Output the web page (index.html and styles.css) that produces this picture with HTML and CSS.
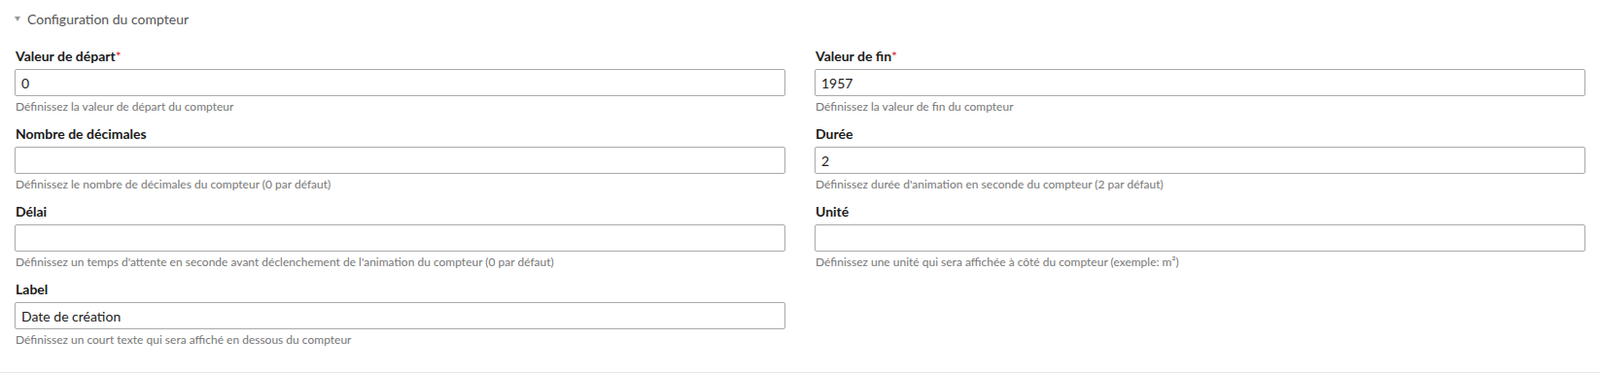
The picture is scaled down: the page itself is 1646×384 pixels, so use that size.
FILE: index.html
```html
<!DOCTYPE html>
<html>
<head>
  <meta charset="utf-8">
  <link rel="stylesheet" href="styles.css">
</head>
<body>

  <div class="panel">
    <div class="panel-title"><span class="caret"></span>Configuration du compteur</div>

    <div class="fields">
      <div class="field">
        <label for="start">Valeur de départ<span class="req">*</span></label>
        <input type="text" id="start" value="0">
        <p class="help">Définissez la valeur de départ du compteur</p>
      </div>
      <div class="field">
        <label for="end">Valeur de fin<span class="req">*</span></label>
        <input type="text" id="end" value="1957">
        <p class="help">Définissez la valeur de fin du compteur</p>
      </div>
      <div class="field">
        <label for="decimals">Nombre de décimales</label>
        <input type="text" id="decimals" value="">
        <p class="help">Définissez le nombre de décimales du compteur (0 par défaut)</p>
      </div>
      <div class="field">
        <label for="duration">Durée</label>
        <input type="text" id="duration" value="2">
        <p class="help">Définissez durée d'animation en seconde du compteur (2 par défaut)</p>
      </div>
      <div class="field">
        <label for="delay">Délai</label>
        <input type="text" id="delay" value="">
        <p class="help">Définissez un temps d'attente en seconde avant déclenchement de l'animation du compteur (0 par défaut)</p>
      </div>
      <div class="field">
        <label for="unit">Unité</label>
        <input type="text" id="unit" value="">
        <p class="help">Définissez une unité qui sera affichée à côté du compteur (exemple: m²)</p>
      </div>
      <div class="field">
        <label for="label">Label</label>
        <input type="text" id="label" value="Date de création">
        <p class="help">Définissez un court texte qui sera affiché en dessous du compteur</p>
      </div>
    </div>
  </div>

</body>
</html>
```

FILE: styles.css
```css
body {
  margin: 0;
  background-color: #fff;
  font-family: Lato, "Open Sans", sans-serif;
  color: #222;
}
.panel {
  padding: 10px 15px 24px;
  border-bottom: 1px solid #e6e6e6;
  height: 349px;
}
.panel-title {
  display: flex;
  align-items: center;
  height: 18px;
  font-size: 14px;
  color: #555;
}
.caret {
  width: 0;
  height: 0;
  margin-right: 7px;
  border-left: 3px solid transparent;
  border-right: 3px solid transparent;
  border-top: 5px solid #999;
}
.fields {
  display: grid;
  grid-template-columns: 1fr 1fr;
  column-gap: 30px;
  margin-top: 20px;
}
.field label {
  display: block;
  height: 20px;
  line-height: 20px;
  padding-left: 1px;
  font-size: 14px;
  font-weight: bold;
  color: #1a1a1a;
}
.req {
  color: #d9262b;
  font-weight: normal;
}
.field input {
  display: block;
  width: 100%;
  height: 28px;
  margin: 3px 0 0;
  padding: 0 6px;
  border: 1px solid #aaa;
  border-radius: 2px;
  box-sizing: border-box;
  font-family: Lato, "Open Sans", sans-serif;
  font-size: 14px;
  color: #222;
}
.help {
  margin: 3px 0 10px;
  height: 16px;
  line-height: 16px;
  padding-left: 1px;
  font-size: 12px;
  color: #777;
}
```
